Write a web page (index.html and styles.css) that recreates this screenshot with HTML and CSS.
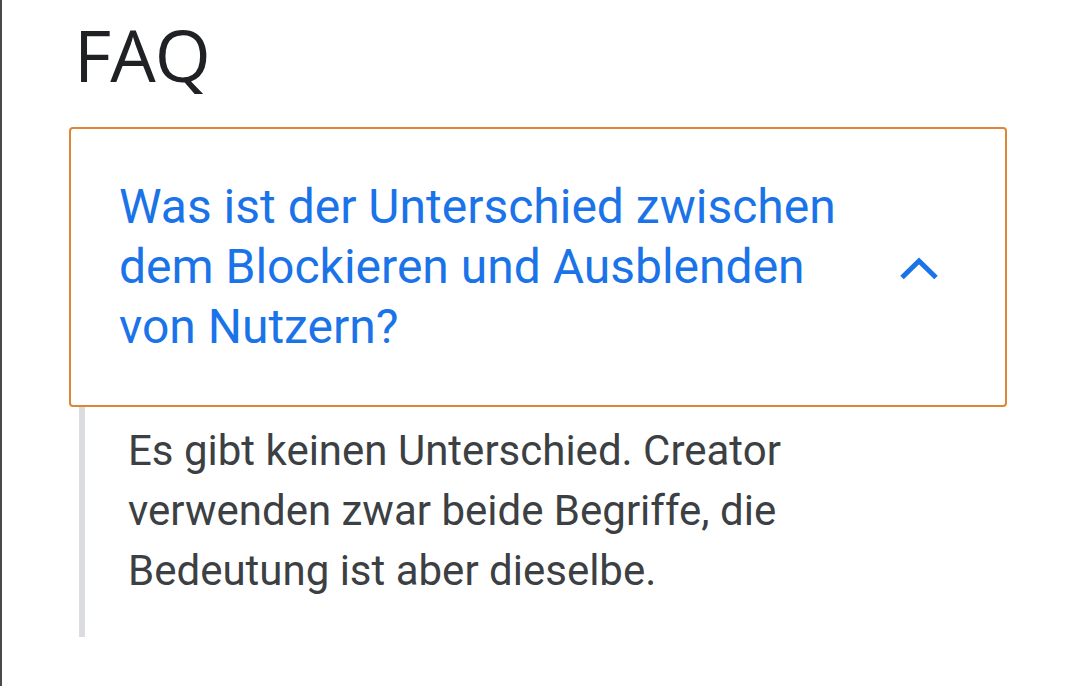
FILE: index.html
```html
<!DOCTYPE html>
<html lang="de">
<head>
<meta charset="utf-8">
<title>FAQ</title>
<link rel="stylesheet" href="styles.css">
</head>
<body>
<div class="page">
  <h1 class="title">FAQ</h1>
  <div class="faq-item">
    <div class="question">
      <span class="question-text">Was ist der Unterschied zwischen dem Blockieren und Ausblenden von Nutzern?</span>
      <span class="chevron">
        <svg width="66" height="40" viewBox="0 0 66 40" aria-hidden="true">
          <polyline points="16,30.5 33,14 50,30.5" fill="none" stroke="#1a73e8" stroke-width="5" stroke-linejoin="miter"/>
        </svg>
      </span>
    </div>
    <div class="answer">
      <p class="answer-text">Es gibt keinen Unterschied. Creator verwenden zwar beide Begriffe, die Bedeutung ist aber dieselbe.</p>
    </div>
  </div>
</div>
</body>
</html>
```
FILE: styles.css
```css
html, body {
  margin: 0;
  padding: 0;
  background: #ffffff;
}
body {
  width: 1069px;
  height: 686px;
  overflow: hidden;
}
.page {
  box-sizing: border-box;
  height: 686px;
  border-left: 2px solid #4a4a4a;
  padding-left: 67px;
  padding-top: 0;
}
.title {
  margin: 0 0 0 5px;
  height: 127px;
  font-family: "Open Sans", sans-serif;
  font-weight: 400;
  font-size: 72px;
  line-height: 109px;
  color: #202124;
  letter-spacing: -1px;
}
.faq-item {
  width: 938px;
}
.question {
  box-sizing: border-box;
  display: flex;
  align-items: center;
  gap: 16px;
  border: 2px solid #de8637;
  border-radius: 4px;
  padding: 48px 53px 48px 48px;
}
.question-text {
  flex: 1;
  font-family: Roboto, "Liberation Sans", sans-serif;
  font-size: 48px;
  line-height: 60px;
  color: #1a73e8;
}
.chevron {
  width: 66px;
  height: 40px;
  display: flex;
}
.answer {
  margin-left: 10px;
  border-left: 6px solid #dadce0;
  padding: 14px 40px 36px 43px;
}
.answer-text {
  margin: 0;
  font-family: Roboto, "Liberation Sans", sans-serif;
  font-size: 42px;
  line-height: 60px;
  color: #3c4043;
  max-width: 720px;
}
```
